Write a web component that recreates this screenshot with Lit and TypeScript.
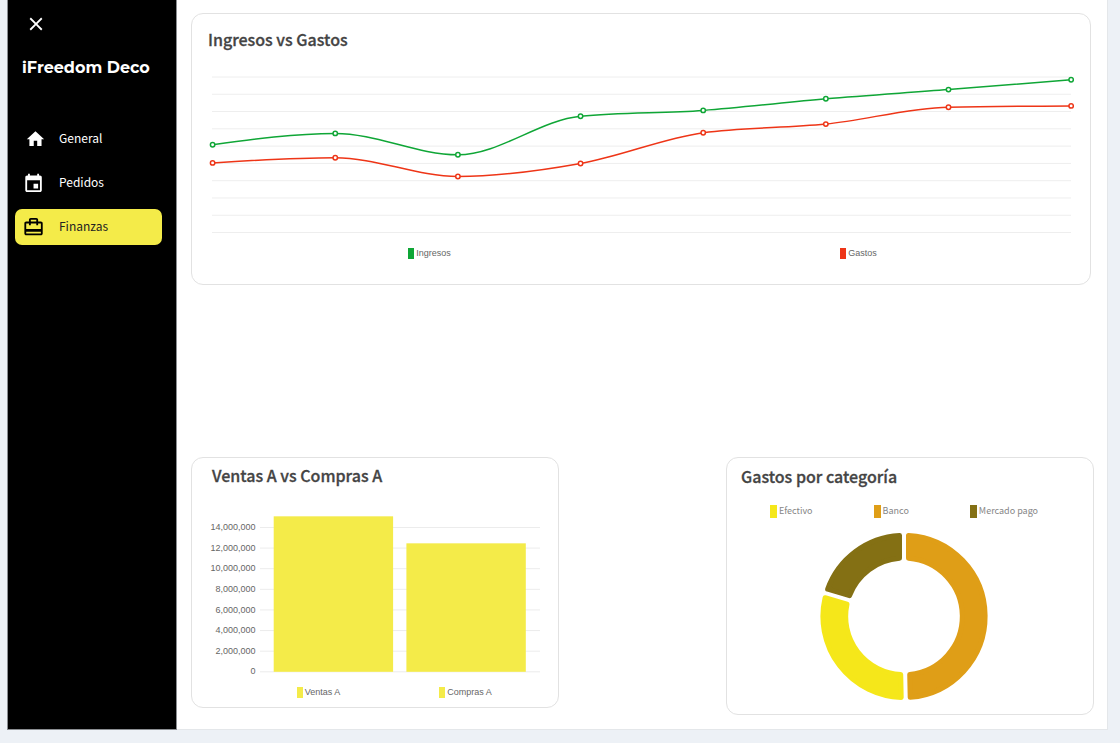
import { LitElement, html, svg, css } from "lit";
import { customElement, property } from "lit/decorators.js";

type Point = [number, number];

/* Monotone cubic interpolation through points that rise in x. */
function smoothPath(points: Point[]): string {
  const n = points.length;
  const slopes: number[] = [];
  for (let i = 0; i < n - 1; i++) {
    slopes.push((points[i + 1][1] - points[i][1]) / (points[i + 1][0] - points[i][0]));
  }
  const tangents: number[] = new Array(n).fill(0);
  for (let i = 1; i < n - 1; i++) {
    const a = slopes[i - 1];
    const b = slopes[i];
    tangents[i] =
      a * b <= 0 ? 0 : Math.sign(a) * 2 * Math.min(Math.abs(a), Math.abs(b), 0.25 * Math.abs(a + b));
  }
  tangents[0] = (3 * slopes[0] - tangents[1]) / 2;
  tangents[n - 1] = (3 * slopes[n - 2] - tangents[n - 2]) / 2;
  let d = `M${points[0][0]} ${points[0][1]}`;
  for (let i = 0; i < n - 1; i++) {
    const [x0, y0] = points[i];
    const [x1, y1] = points[i + 1];
    const dx = (x1 - x0) / 3;
    d += `C${x0 + dx} ${y0 + dx * tangents[i]} ${x1 - dx} ${y1 - dx * tangents[i + 1]} ${x1} ${y1}`;
  }
  return d;
}

/* Ring segment between two clockwise angles, its straight sides moved in by `inset`. */
function ringSegment(cx: number, cy: number, outer: number, inner: number, from: number, to: number, inset: number) {
  const at = (radius: number, degrees: number, side: number): string => {
    const angle = (degrees * Math.PI) / 180 + side * Math.asin(inset / radius);
    return `${(cx + radius * Math.sin(angle)).toFixed(2)} ${(cy - radius * Math.cos(angle)).toFixed(2)}`;
  };
  const large = to - from > 182 ? 1 : 0;
  return (
    `M${at(outer, from, 1)}A${outer} ${outer} 0 ${large} 1 ${at(outer, to, -1)}` +
    `L${at(inner, to, -1)}A${inner} ${inner} 0 ${large} 0 ${at(inner, from, 1)}Z`
  );
}

@customElement("chart-legend")
export class ChartLegend extends LitElement {
  @property({ attribute: false }) items: { label: string; color: string }[] = [];

  static styles = css`
    :host {
      display: block;
      color: #666;
      font: 9px/12px "Liberation Sans", Arial, sans-serif;
    }
    .list {
      display: grid;
      grid-auto-flow: column;
      grid-auto-columns: 1fr;
      margin: 0;
      padding: 0;
      list-style: none;
    }
    .item {
      display: flex;
      justify-content: center;
      align-items: center;
      gap: 2px;
    }
    .swatch {
      width: 6px;
      height: 11px;
    }
    :host([wide]) {
      color: #868686;
      font: 9px/14px "Noto Sans CJK SC", "Noto Sans", sans-serif;
    }
    :host([wide]) .list {
      display: flex;
      flex-wrap: wrap;
      justify-content: center;
      column-gap: 61px;
    }
    :host([wide]) .swatch {
      width: 7px;
      height: 13px;
    }
  `;

  render() {
    return html`<ul class="list">
      ${this.items.map(
        (item) => html`<li class="item">
          <span class="swatch" style="background:${item.color}"></span>${item.label}
        </li>`
      )}
    </ul>`;
  }
}

@customElement("line-chart")
export class LineChart extends LitElement {
  static styles = css`
    :host,
    svg {
      display: block;
      width: 100%;
    }
    .grid {
      stroke: #eee;
    }
    .line {
      fill: none;
      stroke-width: 1.5;
    }
    .dot {
      fill: #fff;
      stroke-width: 1.5;
    }
  `;

  private series = [
    { color: "#0fa636", values: [74.7, 63.4, 84.8, 46.2, 40.4, 28.8, 19.6, 9.8] },
    { color: "#ee3517", values: [92.9, 87.7, 106.5, 93.5, 62.7, 54.1, 37.2, 35.9] },
  ];

  render() {
    const rows = Array.from({ length: 10 }, (_, i) => 7 + i * 17.28);
    return html`<svg viewBox="0 0 866 170" role="img" aria-label="Ingresos vs Gastos">
      ${rows.map((y) => svg`<line class="grid" x1="4" x2="863" y1=${y} y2=${y} />`)}
      ${this.series.map(({ color, values }) => {
        const points = values.map((y, i): Point => [4.6 + i * 122.65, y]);
        return svg`<path class="line" stroke=${color} d=${smoothPath(points)} />
          ${points.map(([x, y]) => svg`<circle class="dot" stroke=${color} cx=${x} cy=${y} r="2.2" />`)}`;
      })}
    </svg>`;
  }
}

@customElement("bar-chart")
export class BarChart extends LitElement {
  static styles = css`
    :host,
    svg {
      display: block;
      width: 100%;
    }
    .grid {
      stroke: #ececec;
    }
    .bar {
      fill: #f4eb49;
    }
    .tick {
      fill: #666;
      font: 9px "Liberation Sans", Arial, sans-serif;
      text-anchor: end;
    }
  `;

  private ticks = [14, 12, 10, 8, 6, 4, 2, 0];

  render() {
    const base = 161.8;
    const perMillion = 10.31;
    const bars = [15.08, 12.46];
    return html`<svg viewBox="0 0 334 170" role="img" aria-label="Ventas A vs Compras A">
      ${this.ticks.map((t) => {
        const y = base - t * perMillion;
        return svg`<line class="grid" x1="52" x2="332" y1=${y} y2=${y} />
          <text class="tick" x="47.5" y=${y + 2.6}>${(t * 1000000).toLocaleString("en-US")}</text>`;
      })}
      ${bars.map(
        (v, i) => svg`<rect class="bar" x=${65.7 + i * 132.7} width="119.4"
          y=${base - v * perMillion} height=${v * perMillion} />`
      )}
    </svg>`;
  }
}

@customElement("donut-chart")
export class DonutChart extends LitElement {
  static styles = css`
    :host {
      display: block;
    }
    svg {
      display: block;
      width: 168px;
      height: 168px;
      margin: 0 auto;
    }
    .segment {
      stroke-width: 5;
      stroke-linejoin: round;
    }
  `;

  private segments = [
    { color: "#df9e17", from: 0, to: 178.8 },
    { color: "#f5e71a", from: 178.8, to: 286.5 },
    { color: "#847014", from: 286.5, to: 360 },
  ];

  render() {
    return html`<svg viewBox="0 0 168 168" role="img" aria-label="Gastos por categoría">
      ${this.segments.map(
        (s) => svg`<path class="segment" fill=${s.color} stroke=${s.color}
          d=${ringSegment(84, 84.4, 81.1, 58.3, s.from, s.to, 4.5)} />`
      )}
    </svg>`;
  }
}

@customElement("app-root")
export class AppRoot extends LitElement {
  static styles = css`
    :host {
      display: block;
      min-height: 100vh;
      box-sizing: border-box;
      padding: 0 12px 13px 7px;
      background: #edf1f6;
      color: #444;
      font-family: "Noto Sans CJK SC", "Noto Sans", sans-serif;
    }
    * {
      box-sizing: border-box;
    }
    .shell {
      display: grid;
      grid-template-columns: 170px minmax(0, 1fr);
      min-height: calc(100vh - 13px);
    }
    .sidebar {
      padding: 13px 14px 0 7px;
      border: solid #8a8d91;
      border-width: 0 1px 1px;
      background: #000;
      color: #fff;
    }
    .close {
      display: flex;
      margin: 0 0 0 10px;
      padding: 0;
      border: 0;
      background: none;
      color: inherit;
      cursor: pointer;
    }
    .brand {
      margin: 22px 0 42px 7px;
      font: 700 16px/22px Montserrat, Inter, sans-serif;
      white-space: nowrap;
    }
    .nav {
      display: grid;
      gap: 8px;
    }
    .link {
      display: flex;
      align-items: center;
      gap: 14px;
      height: 36px;
      padding: 0 8px 2px;
      border-radius: 7px;
      color: #fff;
      font-size: 12px;
      line-height: 20px;
      text-decoration: none;
    }
    .link.active {
      background: #f4eb49;
      color: #222;
    }
    .link.active .icon {
      color: #000;
    }
    .icon {
      display: block;
      width: 22px;
      height: 22px;
      fill: currentColor;
    }
    .main {
      padding: 13px 13px 13px 14px;
      border: solid #e4e7ea;
      border-width: 0 1px 1px 0;
      background: #fff;
    }
    .card {
      padding: 14px 16px 0;
      border: 1px solid #e2e2e2;
      border-radius: 12px;
    }
    .title {
      margin: 0;
      font-size: 16px;
      font-weight: 500;
      line-height: 22px;
      -webkit-text-stroke: 0.3px currentColor;
    }
    .overview {
      margin-right: 3px;
      padding-bottom: 25px;
    }
    .overview line-chart {
      margin-top: 20px;
    }
    .overview chart-legend {
      margin-top: 7px;
      padding: 0 1px 0 7px;
    }
    .row {
      display: flex;
      justify-content: space-between;
      align-items: flex-start;
      gap: 16px;
      margin-top: 172px;
    }
    .row .card {
      flex: 0 1 368px;
      padding-top: 6px;
    }
    .sales {
      padding-bottom: 9px;
    }
    .sales .title {
      padding-left: 4px;
    }
    .sales bar-chart {
      margin-top: 24px;
    }
    .sales chart-legend {
      margin-top: 6px;
      padding: 0 3px 0 37px;
    }
    .row .expenses {
      padding: 7px 26px 14px 14px;
    }
    .expenses chart-legend {
      margin-top: 17px;
    }
    .expenses donut-chart {
      margin-top: 14px;
    }
  `;

  render() {
    return html`<div class="shell" lang="es">
      <aside class="sidebar">
        <button class="close" type="button" aria-label="Cerrar menú">
          <svg class="icon" viewBox="0 0 24 24">
            <path d="M19 6.41 17.59 5 12 10.59 6.41 5 5 6.41 10.59 12 5 17.59 6.41 19 12 13.41 17.59 19 19 17.59 13.41 12z" />
          </svg>
        </button>
        <h1 class="brand">iFreedom Deco</h1>
        <nav class="nav">
          <a class="link" href="#general">
            <svg class="icon" viewBox="-2.4 -2 25.4 25.4">
              <path d="M10 20v-6h4v6h5v-8h3L12 3 2 12h3v8z" />
            </svg>
            General
          </a>
          <a class="link" href="#pedidos">
            <svg class="icon" viewBox="0.5 -2 24 24">
              <path d="M17 12h-5v5h5v-5zM16 1v2H8V1H6v2H5c-1.11 0-1.99.9-1.99 2L3 19c0 1.1.89 2 2 2h14c1.1 0 2-.9 2-2V5c0-1.1-.9-2-2-2h-1V1h-2zm3 18H5V8h14v11z" />
            </svg>
            Pedidos
          </a>
          <a class="link active" href="#finanzas" aria-current="page">
            <svg class="icon" viewBox="0.5 -1.2 24 24">
              <path d="M20 6h-3V4c0-1.11-.89-2-2-2H9c-1.11 0-2 .89-2 2v2H4c-1.11 0-2 .89-2 2v11c0 1.11.89 2 2 2h16c1.11 0 2-.89 2-2V8c0-1.11-.89-2-2-2zM9 4h6v2H9V4zm11 15H4v-2h16v2zm0-5H4V8h3v2h2V8h6v2h2V8h3v6z" />
            </svg>
            Finanzas
          </a>
        </nav>
      </aside>
      <main class="main">
        <section class="card overview">
          <h2 class="title">Ingresos vs Gastos</h2>
          <line-chart></line-chart>
          <chart-legend
            .items=${[
              { label: "Ingresos", color: "#0fa636" },
              { label: "Gastos", color: "#ee3517" },
            ]}
          ></chart-legend>
        </section>
        <div class="row">
          <section class="card sales">
            <h2 class="title">Ventas A vs Compras A</h2>
            <bar-chart></bar-chart>
            <chart-legend
              .items=${[
                { label: "Ventas A", color: "#f4eb49" },
                { label: "Compras A", color: "#f4eb49" },
              ]}
            ></chart-legend>
          </section>
          <section class="card expenses">
            <h2 class="title">Gastos por categoría</h2>
            <chart-legend
              wide
              .items=${[
                { label: "Efectivo", color: "#f5e71a" },
                { label: "Banco", color: "#df9e17" },
                { label: "Mercado pago", color: "#847014" },
              ]}
            ></chart-legend>
            <donut-chart></donut-chart>
          </section>
        </div>
      </main>
    </div>`;
  }
}
